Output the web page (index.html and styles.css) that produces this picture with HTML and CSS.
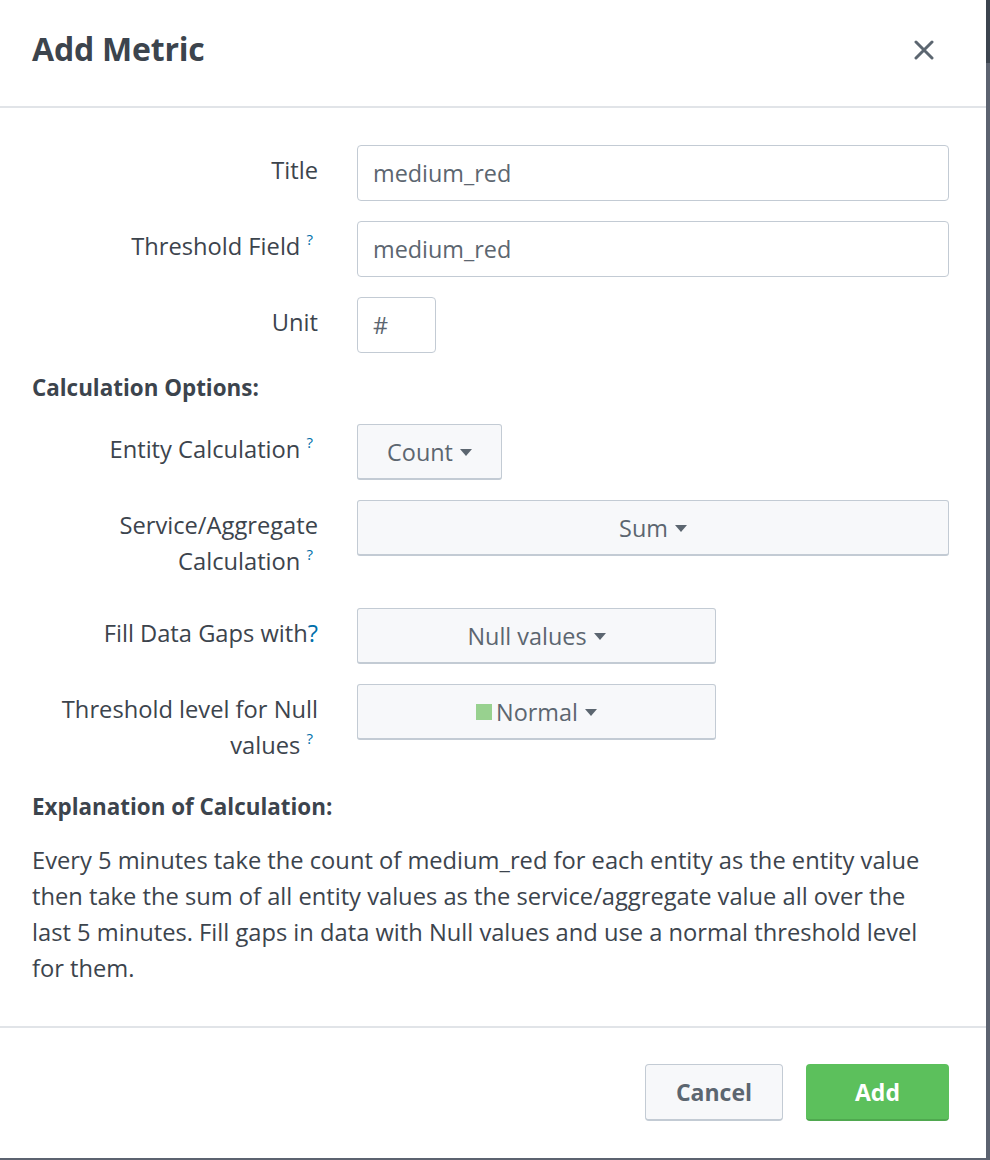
FILE: index.html
```html
<!DOCTYPE html>
<html lang="en">
<head>
<meta charset="utf-8">
<title>Add Metric</title>
<link rel="stylesheet" href="styles.css">
</head>
<body>
<div class="modal">
  <div class="modal-header">
    <h1 class="modal-title">Add Metric</h1>
    <button class="close" aria-label="Close">
      <svg width="20" height="20" viewBox="0 0 20 20"><path d="M2 2 L18 18 M18 2 L2 18" stroke="#5c6670" stroke-width="3" stroke-linecap="round" fill="none"/></svg>
    </button>
  </div>
  <div class="modal-body">
    <div class="form-row">
      <label class="label">Title</label>
      <div class="control"><div class="input">medium_red</div></div>
    </div>
    <div class="form-row">
      <label class="label">Threshold Field&nbsp;<sup class="help">?</sup></label>
      <div class="control"><div class="input">medium_red</div></div>
    </div>
    <div class="form-row">
      <label class="label">Unit</label>
      <div class="control"><div class="input input-small">#</div></div>
    </div>

    <h2 class="section-title">Calculation Options:</h2>

    <div class="form-row">
      <label class="label">Entity Calculation&nbsp;<sup class="help">?</sup></label>
      <div class="control"><button class="dropdown dd-count">Count <span class="caret"></span></button></div>
    </div>
    <div class="form-row">
      <label class="label">Service/Aggregate Calculation&nbsp;<sup class="help">?</sup></label>
      <div class="control"><button class="dropdown dd-full">Sum <span class="caret"></span></button></div>
    </div>
    <div class="form-row">
      <label class="label">Fill Data Gaps with<span class="help-inline">?</span></label>
      <div class="control"><button class="dropdown dd-mid">Null values <span class="caret"></span></button></div>
    </div>
    <div class="form-row">
      <label class="label">Threshold level for Null values&nbsp;<sup class="help">?</sup></label>
      <div class="control"><button class="dropdown dd-mid"><span class="swatch"></span>Normal <span class="caret"></span></button></div>
    </div>

    <h2 class="section-title section-title-2">Explanation of Calculation:</h2>
    <p class="explanation">Every 5 minutes take the count of medium_red for each entity as the entity value then take the sum of all entity values as the service/aggregate value all over the last 5 minutes. Fill gaps in data with Null values and use a normal threshold level for them.</p>
  </div>
  <div class="modal-footer">
    <button class="btn btn-cancel">Cancel</button>
    <button class="btn btn-primary">Add</button>
  </div>
</div>
</body>
</html>
```

FILE: styles.css
```css
* { box-sizing: border-box; }

html, body {
  margin: 0;
  padding: 0;
}

body {
  width: 990px;
  height: 1160px;
  background: linear-gradient(#3c444e 0, #3c444e 63px, #5c6370 63px, #5c6370 100%);
  font-family: "Open Sans", "Liberation Sans", sans-serif;
  color: #3c444d;
  overflow: hidden;
}

.modal {
  width: 986px;
  height: 1158px;
  background: #ffffff;
  display: flex;
  flex-direction: column;
}

.modal-header {
  height: 108px;
  border-bottom: 2px solid #e1e4e8;
  display: flex;
  align-items: center;
  justify-content: space-between;
  padding: 0 52px 0 32px;
  flex: none;
}

.modal-title {
  margin: 0 0 10px 0;
  font-size: 32px;
  font-weight: 700;
  color: #3c444d;
  letter-spacing: -0.2px;
}

.close {
  border: none;
  background: none;
  padding: 0;
  width: 20px;
  height: 20px;
  display: flex;
  margin-bottom: 6px;
}

.modal-body {
  flex: 1;
  padding: 37px 37px 0 32px;
}

.form-row {
  display: grid;
  grid-template-columns: 286px 1fr;
  column-gap: 39px;
  margin-bottom: 20px;
}

.label {
  text-align: right;
  font-size: 23.7px;
  line-height: 36px;
  padding: 7px 0 9px 0;
  color: #3c444d;
}

.help {
  color: #006eaa;
  font-size: 15px;
  line-height: 1;
  vertical-align: 0;
  position: relative;
  top: -10px;
  margin-right: 5px;
}

.help-inline {
  color: #006eaa;
}

.control {
  display: flex;
  align-items: flex-start;
}

.input {
  width: 100%;
  height: 56px;
  border: 1px solid #c3cbd4;
  border-radius: 4px;
  padding: 0 15px;
  display: flex;
  align-items: center;
  font-size: 23.4px;
  color: #5c6670;
}

.input-small {
  width: 79px;
}

.dropdown {
  height: 56px;
  border: 1px solid #c3cbd4;
  border-bottom: 2px solid #c3cbd4;
  border-radius: 3px;
  background: #f7f8fa;
  font-family: inherit;
  font-size: 23.4px;
  color: #5c6670;
  display: flex;
  align-items: center;
  justify-content: center;
  padding: 0 12px;
}

.dd-count { width: 145px; }
.dd-full { width: 100%; }
.dd-mid { width: 359px; }

.caret {
  display: inline-block;
  width: 0;
  height: 0;
  border-left: 6px solid transparent;
  border-right: 6px solid transparent;
  border-top: 7px solid #5c6670;
  margin-left: 7px;
  margin-top: 1px;
}

.swatch {
  display: inline-block;
  width: 16px;
  height: 16px;
  background: #98d18f;
  margin-right: 4px;
}

.section-title {
  margin: 19px 0 21px 0;
  font-size: 22.4px;
  line-height: 30px;
  font-weight: 700;
  color: #3c444d;
}

.section-title-2 {
  margin: 4px 0 20px 0;
}

.explanation {
  margin: 0;
  max-width: 898px;
  font-size: 23.7px;
  line-height: 36px;
  color: #3c444d;
}

.modal-footer {
  flex: none;
  height: 132px;
  border-top: 2px solid #e1e4e8;
  display: flex;
  justify-content: flex-end;
  align-items: flex-start;
  gap: 23px;
  padding: 36px 37px 0 0;
}

.btn {
  height: 57px;
  border-radius: 4px;
  font-family: inherit;
  font-size: 23px;
  font-weight: 700;
}

.btn-cancel {
  width: 138px;
  background: #f7f8fa;
  border: 1px solid #c3cbd4;
  border-bottom: 2px solid #c3cbd4;
  color: #5c6670;
}

.btn-primary {
  width: 143px;
  background: #5cc05c;
  border: none;
  border-bottom: 2px solid #4fa84f;
  color: #ffffff;
}
```
